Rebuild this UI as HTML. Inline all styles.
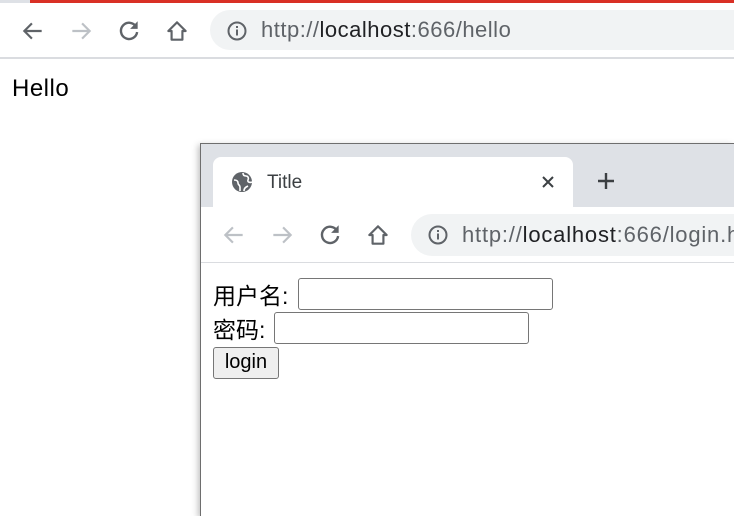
<!DOCTYPE html>
<html><head><meta charset="utf-8"><style>
*{margin:0;padding:0;box-sizing:border-box}
body{width:734px;height:516px;background:#fff;position:relative;overflow:hidden;font-family:"Liberation Sans","Noto Sans CJK SC",sans-serif}
.a{position:absolute;white-space:nowrap;overflow:hidden}
.url{font-size:22px;color:#5f6368;font-family:"Liberation Sans",sans-serif;letter-spacing:0.5px}
.url b{font-weight:normal;color:#202124}
svg{position:absolute}
</style></head><body>
<div class="a" style="left:0;top:0;width:30px;height:3px;background:#dee1e6"></div>
<div class="a" style="left:30px;top:0;width:704px;height:3px;background:#d93025"></div>
<svg style="left:20px;top:18px" width="26" height="26" viewBox="0 0 24 24"><path d="M20 12H5M11 5l-7 7 7 7" fill="none" stroke="#5f6368" stroke-width="2"/></svg>
<svg style="left:68px;top:18px" width="26" height="26" viewBox="0 0 24 24"><path d="M4 12h15M13 5l7 7-7 7" fill="none" stroke="#bdc1c6" stroke-width="2"/></svg>
<svg style="left:116px;top:18px" width="26" height="26" viewBox="0 0 24 24"><path d="M18.5 8A7.5 7.5 0 1 0 19.5 13" fill="none" stroke="#5f6368" stroke-width="2.2"/><path d="M20 3v7h-7z" fill="#5f6368"/></svg>
<svg style="left:164px;top:18px" width="26" height="26" viewBox="0 0 24 24"><path d="M12 4L4 12h3v8h10v-8h3z" fill="none" stroke="#5f6368" stroke-width="2" stroke-linejoin="round"/></svg>
<div class="a" style="left:210px;top:10px;width:524px;height:40px;border-radius:20px 0 0 20px;background:#f1f3f4"></div>
<svg style="left:226px;top:20px" width="22" height="22" viewBox="0 0 22 22"><circle cx="11" cy="11" r="8.5" fill="none" stroke="#5f6368" stroke-width="2"/><rect x="10" y="9.5" width="2" height="6" fill="#5f6368"/><rect x="10" y="6" width="2" height="2" fill="#5f6368"/></svg>
<div class="a url" style="left:261px;top:17px">http://<b>localhost</b>:666/hello</div>
<div class="a" style="left:0;top:57px;width:734px;height:2px;background:#dadce0"></div>
<div class="a" style="left:12px;top:75px;font-size:24px;color:#000;letter-spacing:0.5px">Hello</div>

<div class="a" style="left:200px;top:143px;width:534px;height:373px;border:1px solid #6e6e6e;border-right:none;border-bottom:none;background:#fff;box-shadow:-2px 2px 6px rgba(0,0,0,.25)"></div>
<div class="a" style="left:201px;top:144px;width:533px;height:63px;background:#dee1e6"></div>
<div class="a" style="left:213px;top:157px;width:360px;height:52px;background:#fff;border-radius:8px 8px 0 0"></div>
<svg style="left:231px;top:171px" width="22" height="22" viewBox="0 0 22 22"><circle cx="11" cy="11" r="10" fill="#5f6368"/><path d="M3 9c3 0 4 1 4 3s2 2 2 4v4M12 2c0 2 1 3 3 3s3 2 2 4 2 3 4 2M13 20c0-3 2-4 4-5" fill="none" stroke="#fff" stroke-width="1.6"/></svg>
<div class="a" style="left:267px;top:172px;font-size:19px;color:#3c4043">Title</div>
<svg style="left:540px;top:174px" width="16" height="16" viewBox="0 0 16 16"><path d="M3 3l10 10M13 3L3 13" stroke="#3c4043" stroke-width="2"/></svg>
<svg style="left:595px;top:170px" width="22" height="22" viewBox="0 0 22 22"><path d="M11 3v16M3 11h16" stroke="#3c4043" stroke-width="2.4"/></svg>
<svg style="left:221px;top:222px" width="26" height="26" viewBox="0 0 24 24"><path d="M20 12H5M11 5l-7 7 7 7" fill="none" stroke="#bdc1c6" stroke-width="2"/></svg>
<svg style="left:269px;top:222px" width="26" height="26" viewBox="0 0 24 24"><path d="M4 12h15M13 5l7 7-7 7" fill="none" stroke="#bdc1c6" stroke-width="2"/></svg>
<svg style="left:317px;top:222px" width="26" height="26" viewBox="0 0 24 24"><path d="M18.5 8A7.5 7.5 0 1 0 19.5 13" fill="none" stroke="#5f6368" stroke-width="2.2"/><path d="M20 3v7h-7z" fill="#5f6368"/></svg>
<svg style="left:365px;top:222px" width="26" height="26" viewBox="0 0 24 24"><path d="M12 4L4 12h3v8h10v-8h3z" fill="none" stroke="#5f6368" stroke-width="2" stroke-linejoin="round"/></svg>
<div class="a" style="left:411px;top:214px;width:323px;height:42px;border-radius:21px 0 0 21px;background:#f1f3f4"></div>
<svg style="left:427px;top:224px" width="22" height="22" viewBox="0 0 22 22"><circle cx="11" cy="11" r="8.5" fill="none" stroke="#5f6368" stroke-width="2"/><rect x="10" y="9.5" width="2" height="6" fill="#5f6368"/><rect x="10" y="6" width="2" height="2" fill="#5f6368"/></svg>
<div class="a url" style="left:462px;top:222px;width:272px;font-size:22px;letter-spacing:0.8px">http://<b>localhost</b>:666/login.html</div>
<div class="a" style="left:201px;top:262px;width:533px;height:1px;background:#dadce0"></div>
<div class="a" style="left:213px;top:277px;font-size:23px;color:#000">用户名:</div>
<div class="a" style="left:298px;top:278px;width:255px;height:32px;border:1px solid #767676;border-radius:3px;background:#fff"></div>
<div class="a" style="left:213px;top:311px;font-size:23px;color:#000">密码:</div>
<div class="a" style="left:274px;top:312px;width:255px;height:32px;border:1px solid #767676;border-radius:3px;background:#fff"></div>
<div class="a" style="left:213px;top:347px;width:66px;height:32px;border:1px solid #767676;border-radius:3px;background:#efefef;font-size:20px;text-align:center;line-height:29px;color:#000">login</div>
</body></html>
